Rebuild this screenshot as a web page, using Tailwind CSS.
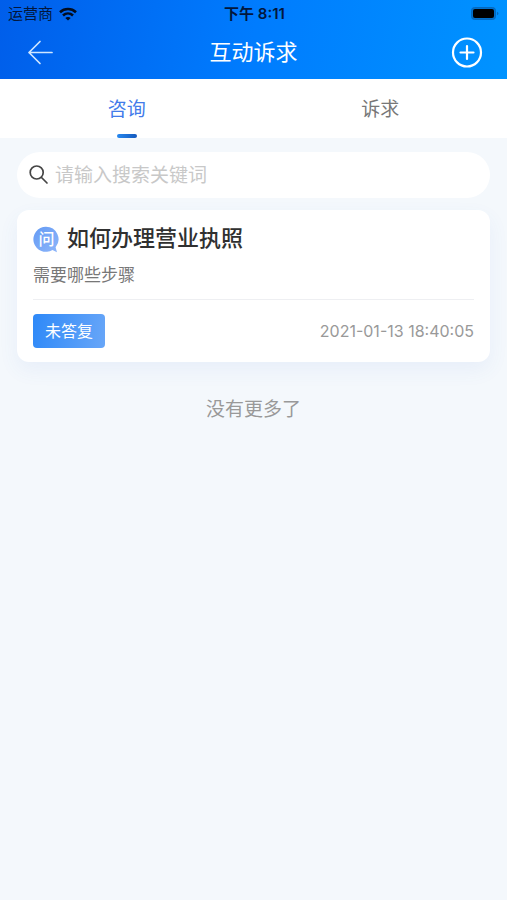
<!DOCTYPE html>
<html lang="zh-CN">
<head>
<meta charset="utf-8">
<meta name="viewport" content="width=device-width, initial-scale=1">
<title>互动诉求</title>
<script src="https://cdn.jsdelivr.net/npm/@tailwindcss/browser@4"></script>
</head>
<body class="min-h-screen bg-[#f4f8fc] font-['Inter','Noto_Sans_CJK_SC',sans-serif] text-[#333]">
<header class="bg-linear-[100deg] from-[#005eea] via-[#007cfe] to-[#0093ff]">
  <div class="grid h-7 grid-cols-3 items-center pr-1.5 pl-2 text-[15px] leading-5 text-[#03173c]">
    <div class="flex items-center gap-1.5">
      <span>运营商</span>
      <svg class="h-3.5 w-[18px]" viewBox="0 0 18 14" fill="none" stroke="#020d20" stroke-width="2.6" aria-label="Wi-Fi">
        <path d="M1 5.2C5.5 1 12.500 1 17 5.2"/>
        <path d="M4 8.500C6.900 5.900 11.100 5.900 14 8.500"/>
        <path d="M6.300 10.900C7.800 9.600 10.200 9.600 11.700 10.900L9 13.600Z" fill="#020d20" stroke="none"/>
      </svg>
    </div>
    <div class="text-center font-semibold whitespace-nowrap">下午 8:11</div>
    <svg class="h-[14px] w-[31px] justify-self-end" viewBox="0 0 31 14" aria-label="电池">
      <rect x="1.500" y=".5" width="24" height="12" rx="3" fill="#0070cc" stroke="#0568bd"/>
      <rect x="3" y="2" width="21" height="9" rx="2" fill="#000"/>
      <path d="M27 4.700c2 .6 2 3 0 3.600z" fill="#0568bd"/>
    </svg>
  </div>
  <div class="flex h-[51px] items-center justify-between px-6 pb-1">
    <button type="button" aria-label="返回" class="flex size-8 items-center justify-center">
      <svg class="size-7" viewBox="0 0 28 28" fill="none" stroke="#cfe6ff" stroke-width="1.700" stroke-linecap="round" stroke-linejoin="round"><path d="M14 3.500 3 14.500 14 25.500M3 14.500H26"/></svg>
    </button>
    <h1 class="text-[22px] leading-8 text-white">互动诉求</h1>
    <button type="button" aria-label="新增" class="flex size-8 items-center justify-center">
      <svg class="size-8" viewBox="0 0 32 32" fill="none" stroke="#fff" stroke-width="2.200" stroke-linecap="round"><circle cx="16" cy="16.500" r="14"/><path d="M16 10v13M9.500 16.500h13"/></svg>
    </button>
  </div>
</header>
<nav class="grid h-[59px] grid-cols-2 bg-white text-[19px] leading-7">
  <button type="button" class="flex flex-col items-center justify-between pt-[17px] text-[#427bea]"><span>咨询</span><span class="h-1 w-5 rounded-full bg-linear-to-r from-[#2788ef] to-[#1559bd]"></span></button>
  <button type="button" class="flex flex-col items-center pt-[17px] text-[#777]"><span>诉求</span></button>
</nav>
<main class="px-[17px] pt-3.5">
  <label class="flex h-[46px] items-center gap-1.5 rounded-full bg-white px-3">
    <svg class="size-5 shrink-0" viewBox="0 0 20 20" fill="none" stroke="#454545" stroke-width="1.700" stroke-linecap="round"><circle cx="7.700" cy="7.500" r="6.500"/><path d="m12.500 12.500 5.500 5.500"/></svg>
    <input type="search" aria-label="搜索" placeholder="请输入搜索关键词" class="min-w-0 flex-1 bg-transparent pt-0.5 text-[19px] leading-7 outline-none placeholder:text-[#c8c8c8]">
  </label>
  <article class="mt-3 rounded-xl bg-white px-4 pt-3 pb-3.5 shadow-[0_8px_20px_rgba(70,110,210,0.07)]">
    <div class="flex items-center gap-[7px]">
      <span class="relative mt-0.5 flex size-[27px] items-center justify-center">
        <svg class="absolute inset-0 size-full" viewBox="0 0 27 27" aria-hidden="true"><defs><linearGradient id="bubble" x2="1" y2="1"><stop stop-color="#649bf4"/><stop offset="1" stop-color="#8db5fa"/></linearGradient></defs><path d="M13 .8a12.500 12.500 0 1 0 6.500 23.100L24 26.200 22.600 21.300A12.500 12.500 0 0 0 13 .8Z" fill="url(#bubble)"/></svg>
        <span class="relative text-base leading-6 font-medium text-white">问</span>
      </span>
      <h2 class="text-[22px] leading-8 font-medium text-[#303030]">如何办理营业执照</h2>
    </div>
    <p class="mt-[9px] text-[17px] leading-6 text-[#777]">需要哪些步骤</p>
    <div class="mt-3 flex items-center justify-between border-t border-[#eeeff2] pt-3.5">
      <span class="rounded bg-linear-[100deg] from-[#2e89f8] to-[#68a6f8] px-3 py-[5px] text-base leading-6 text-white">未答复</span>
      <time datetime="2021-01-13T18:40:05" class="text-base leading-6 text-[#999]">2021-01-13 18:40:05</time>
    </div>
  </article>
  <p class="mt-[34px] text-center text-[19px] leading-7 text-[#999]">没有更多了</p>
</main>
</body>
</html>
